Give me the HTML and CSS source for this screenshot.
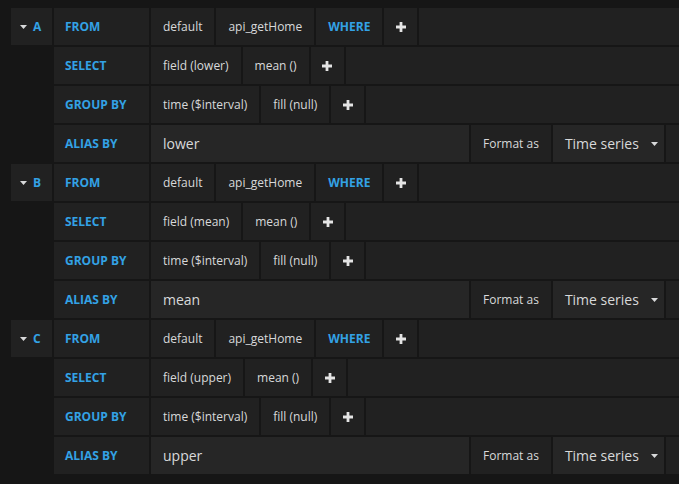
FILE: index.html
```html
<!DOCTYPE html>
<html>
<head>
<meta charset="utf-8">
<link rel="stylesheet" href="styles.css">
</head>
<body>
<div class="editor">
  <div class="query">
    <div class="ref"><svg class="caret" width="7" height="4" viewBox="0 0 7 4"><path d="M0 0H7L3.5 4Z"/></svg><span>A</span></div>
    <div class="rows">
      <div class="row"><div class="kw">FROM</div><div class="seg">default</div><div class="seg">api_getHome</div><div class="seg kwseg">WHERE</div><div class="plus"><svg width="10" height="10" viewBox="0 0 10 10"><path d="M3.6 0H6.4V3.6H10V6.4H6.4V10H3.6V6.4H0V3.6H3.6Z"/></svg></div><div class="fill"></div></div>
      <div class="row"><div class="kw">SELECT</div><div class="seg">field (lower)</div><div class="seg">mean ()</div><div class="plus"><svg width="10" height="10" viewBox="0 0 10 10"><path d="M3.6 0H6.4V3.6H10V6.4H6.4V10H3.6V6.4H0V3.6H3.6Z"/></svg></div><div class="fill"></div></div>
      <div class="row"><div class="kw">GROUP BY</div><div class="seg">time ($interval)</div><div class="seg">fill (null)</div><div class="plus"><svg width="10" height="10" viewBox="0 0 10 10"><path d="M3.6 0H6.4V3.6H10V6.4H6.4V10H3.6V6.4H0V3.6H3.6Z"/></svg></div><div class="fill"></div></div>
      <div class="row"><div class="kw">ALIAS BY</div><div class="input">lower</div><div class="seg">Format as</div><div class="select"><span>Time series</span><svg class="caret" width="7" height="4" viewBox="0 0 7 4"><path d="M0 0H7L3.5 4Z"/></svg></div><div class="fill"></div></div>
    </div>
  </div>
  <div class="query">
    <div class="ref"><svg class="caret" width="7" height="4" viewBox="0 0 7 4"><path d="M0 0H7L3.5 4Z"/></svg><span>B</span></div>
    <div class="rows">
      <div class="row"><div class="kw">FROM</div><div class="seg">default</div><div class="seg">api_getHome</div><div class="seg kwseg">WHERE</div><div class="plus"><svg width="10" height="10" viewBox="0 0 10 10"><path d="M3.6 0H6.4V3.6H10V6.4H6.4V10H3.6V6.4H0V3.6H3.6Z"/></svg></div><div class="fill"></div></div>
      <div class="row"><div class="kw">SELECT</div><div class="seg">field (mean)</div><div class="seg">mean ()</div><div class="plus"><svg width="10" height="10" viewBox="0 0 10 10"><path d="M3.6 0H6.4V3.6H10V6.4H6.4V10H3.6V6.4H0V3.6H3.6Z"/></svg></div><div class="fill"></div></div>
      <div class="row"><div class="kw">GROUP BY</div><div class="seg">time ($interval)</div><div class="seg">fill (null)</div><div class="plus"><svg width="10" height="10" viewBox="0 0 10 10"><path d="M3.6 0H6.4V3.6H10V6.4H6.4V10H3.6V6.4H0V3.6H3.6Z"/></svg></div><div class="fill"></div></div>
      <div class="row"><div class="kw">ALIAS BY</div><div class="input">mean</div><div class="seg">Format as</div><div class="select"><span>Time series</span><svg class="caret" width="7" height="4" viewBox="0 0 7 4"><path d="M0 0H7L3.5 4Z"/></svg></div><div class="fill"></div></div>
    </div>
  </div>
  <div class="query">
    <div class="ref"><svg class="caret" width="7" height="4" viewBox="0 0 7 4"><path d="M0 0H7L3.5 4Z"/></svg><span>C</span></div>
    <div class="rows">
      <div class="row"><div class="kw">FROM</div><div class="seg">default</div><div class="seg">api_getHome</div><div class="seg kwseg">WHERE</div><div class="plus"><svg width="10" height="10" viewBox="0 0 10 10"><path d="M3.6 0H6.4V3.6H10V6.4H6.4V10H3.6V6.4H0V3.6H3.6Z"/></svg></div><div class="fill"></div></div>
      <div class="row"><div class="kw">SELECT</div><div class="seg">field (upper)</div><div class="seg">mean ()</div><div class="plus"><svg width="10" height="10" viewBox="0 0 10 10"><path d="M3.6 0H6.4V3.6H10V6.4H6.4V10H3.6V6.4H0V3.6H3.6Z"/></svg></div><div class="fill"></div></div>
      <div class="row"><div class="kw">GROUP BY</div><div class="seg">time ($interval)</div><div class="seg">fill (null)</div><div class="plus"><svg width="10" height="10" viewBox="0 0 10 10"><path d="M3.6 0H6.4V3.6H10V6.4H6.4V10H3.6V6.4H0V3.6H3.6Z"/></svg></div><div class="fill"></div></div>
      <div class="row"><div class="kw">ALIAS BY</div><div class="input">upper</div><div class="seg">Format as</div><div class="select"><span>Time series</span><svg class="caret" width="7" height="4" viewBox="0 0 7 4"><path d="M0 0H7L3.5 4Z"/></svg></div><div class="fill"></div></div>
    </div>
  </div>
</div>
</body>
</html>
```
FILE: styles.css
```css
html, body {
  margin: 0;
  padding: 0;
  background: #161616;
}
body {
  font-family: "Open Sans", "DejaVu Sans", sans-serif;
  font-size: 12px;
  color: #d8d9da;
  overflow: hidden;
}
.editor {
  padding: 8px 0 0 11px;
  display: flex;
  flex-direction: column;
  gap: 2px;
}
.query {
  display: flex;
  gap: 2px;
  align-items: flex-start;
}
.ref {
  width: 41px;
  height: 37px;
  box-sizing: border-box;
  padding-left: 9px;
  background: #212121;
  display: flex;
  align-items: center;
  gap: 6px;
  color: #33a2e5;
  font-weight: 700;
}
.ref .caret {
  fill: #d8d9da;
  margin-top: 1px;
}
.rows {
  flex: 1;
  display: flex;
  flex-direction: column;
  gap: 2px;
}
.row {
  display: flex;
  gap: 2px;
  height: 37px;
}
.row > div {
  background: #212121;
  display: flex;
  align-items: center;
  box-sizing: border-box;
}
.kw {
  width: 95px;
  padding-left: 11px;
  color: #33a2e5;
  font-weight: 700;
}
.seg {
  padding: 0 12px;
  white-space: nowrap;
}
.kwseg {
  color: #33a2e5;
  font-weight: 700;
}
.plus {
  width: 33px;
  justify-content: center;
}
.plus svg {
  fill: #e4e4e4;
}
.fill {
  flex: 1;
}
.row > .input {
  width: 318px;
  padding-left: 12px;
  font-size: 14px;
  background: #262626;
}
.row > .select {
  width: 111px;
  padding: 0 6px 0 12px;
  font-size: 14px;
  background: #262626;
  justify-content: space-between;
}
.select .caret {
  fill: #d8d9da;
  margin-top: 1px;
}
```
